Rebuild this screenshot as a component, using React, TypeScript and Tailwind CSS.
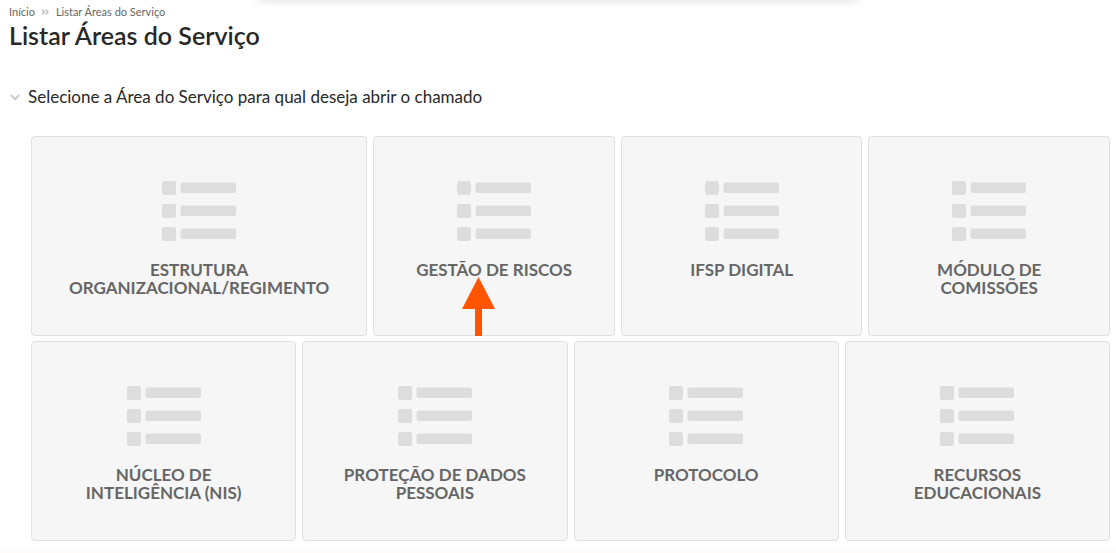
import React from 'react';

const rows = [
  ['Estrutura Organizacional/Regimento', 'Gestão de Riscos', 'IFSP Digital', 'Módulo de Comissões'],
  ['Núcleo de Inteligência (NIS)', 'Proteção de Dados Pessoais', 'Protocolo', 'Recursos Educacionais'],
];

const ListIcon = () => (
  <svg width="74" height="60" viewBox="0 0 74 60" fill="#dddddd" aria-hidden="true">
    {[0, 23, 46].map((y) => (
      <g key={y}>
        <rect x="0" y={y} width="14" height="14" rx="2" />
        <rect x="18.5" y={y + 1.5} width="55.5" height="10.5" rx="2" />
      </g>
    ))}
  </svg>
);

const Arrow = () => (
  <svg
    className="absolute left-[89px] top-[141px]"
    width="33"
    height="59"
    viewBox="0 0 33 59"
    fill="#ff5500"
    aria-hidden="true"
  >
    <path d="M16.5 0L33 32H20V59H13V32H0Z" />
  </svg>
);

const AreaCard = ({ name, marked }: { name: string; marked: boolean }) => (
  <li className="relative flex flex-1">
    <a
      href="#"
      className="flex flex-1 flex-col items-center min-h-[200px] px-[37px] pt-11 pb-8 rounded border border-[#e0e0e0] bg-[#f6f6f6] hover:bg-[#eeeeee]"
    >
      <ListIcon />
      <span className="mt-5 text-center text-[17px] leading-[18px] font-bold uppercase text-[#666666]">
        {name}
      </span>
    </a>
    {marked && <Arrow />}
  </li>
);

const App = () => {
  return (
    <div className="relative min-h-screen flex flex-col overflow-hidden bg-white font-['Lato',sans-serif] text-[#282828]">
      <div className="absolute inset-x-[258px] -top-5 h-5 shadow-[0_0_10px_rgba(0,0,0,0.15)]" />

      <header className="px-[9px] pt-1">
        <nav aria-label="Breadcrumb" className="flex items-center text-[11px] leading-4 text-[#666666]">
          <a href="#">Início</a>
          <svg className="ml-[6px] mr-[7px]" width="8" height="8" viewBox="0 0 8 8" fill="none" stroke="#bbbbbb" strokeWidth="1.3" aria-hidden="true">
            <path d="M1 1.5L3.5 4L1 6.5M4.5 1.5L7 4L4.5 6.5" />
          </svg>
          <a href="#">Listar Áreas do Serviço</a>
        </nav>
        <h1 className="text-[25px] leading-[30px] font-semibold">Listar Áreas do Serviço</h1>
      </header>

      <main className="flex-1 pl-[10px] pr-[6px] pt-[35px]">
        <h2>
          <button className="flex items-center text-left text-[17px] leading-6">
            <svg className="mr-2" width="10" height="7" viewBox="0 0 10 7" fill="none" stroke="#cccccc" strokeWidth="2.2" aria-hidden="true">
              <path d="M0.8 1L5 5.2L9.2 1" />
            </svg>
            Selecione a Área do Serviço para qual deseja abrir o chamado
          </button>
        </h2>

        <div className="flex flex-col gap-[5px] ml-[21px] mt-[27px]">
          {rows.map((areas) => (
            <ul key={areas[0]} className="flex gap-[6px]">
              {areas.map((name) => (
                <AreaCard key={name} name={name} marked={name === 'Gestão de Riscos'} />
              ))}
            </ul>
          ))}
        </div>
      </main>

      <footer className="mt-[6px] h-[5px] bg-[#fefcfa]" />
    </div>
  );
};

export default App;
